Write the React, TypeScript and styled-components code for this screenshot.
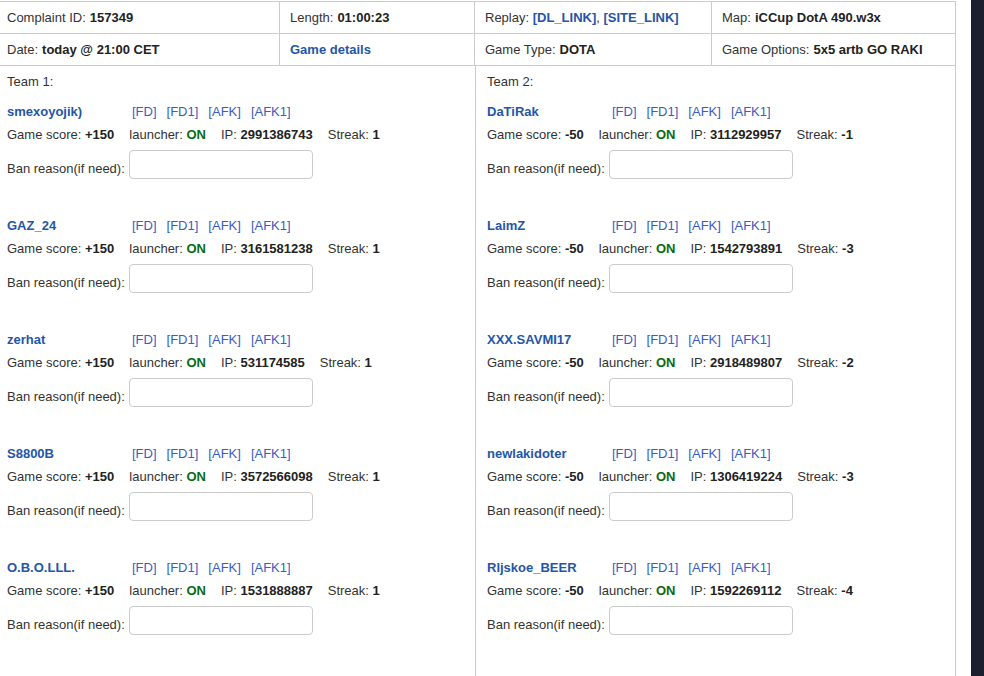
import React from "react";
import styled, { createGlobalStyle } from "styled-components";

const GlobalStyle = createGlobalStyle`
    html, body {
        margin: 0;
        padding: 0;
        background: #fff;
    }
    body {
        font-family: "Liberation Sans", Arial, sans-serif;
        font-size: 13px;
        color: #333;
    }
`;

const Page = styled.div`
    display: flex;
    min-height: 676px;
`;

const Panel = styled.div`
    width: 956px;
    padding-top: 1px;
    display: flex;
    flex-direction: column;
`;

const DarkEdge = styled.div`
    margin-left: auto;
    width: 13px;
    background: #1b1f2e;
`;

const InfoGrid = styled.div`
    display: grid;
    grid-template-columns: 280px 195px 237px 244px;
    border-top: 1px solid #ccc;
`;

const InfoCell = styled.div`
    height: 31px;
    display: flex;
    align-items: center;
    padding-left: 7px;
    border-bottom: 1px solid #ccc;
    border-right: 1px solid #ccc;
    white-space: nowrap;
    &:nth-child(4n + 2),
    &:nth-child(4n + 3),
    &:nth-child(4n + 4) {
        padding-left: 10px;
    }
`;

const Value = styled.b`
    color: #222;
    margin-left: 4px;
`;

const Link = styled.a`
    color: #2456a8;
    font-weight: bold;
    text-decoration: none;
`;

const Teams = styled.div`
    flex: 1;
    display: grid;
    grid-template-columns: 476px 480px;
`;

const TeamColumn = styled.div`
    border-right: 1px solid #ccc;
    padding: 8px 0 0 7px;
    &:last-child {
        padding-left: 11px;
    }
`;

const TeamTitle = styled.div`
    line-height: 16px;
    margin-bottom: 11px;
`;

const Player = styled.div`
    display: flex;
    flex-direction: column;
    margin-bottom: 36px;
`;

const NameRow = styled.div`
    display: flex;
    align-items: center;
    height: 20px;
`;

const Name = styled.a`
    width: 125px;
    color: #2456a8;
    font-weight: bold;
    text-decoration: none;
`;

const Flag = styled.a`
    color: #3a5cbf;
    text-decoration: none;
    margin-right: 10px;
`;

const StatsRow = styled.div`
    display: flex;
    align-items: center;
    gap: 15px;
    height: 20px;
    margin-top: 3px;
`;

const Stat = styled.span`
    white-space: nowrap;
`;

const Strong = styled.b<{ $green?: boolean }>`
    color: ${(p) => (p.$green ? "#0a6b14" : "#222")};
`;

const BanRow = styled.label`
    display: flex;
    align-items: flex-end;
    margin-top: 6px;
`;

const BanLabel = styled.span`
    line-height: 16px;
    padding-bottom: 2px;
`;

const BanInput = styled.input`
    width: 184px;
    height: 29px;
    box-sizing: border-box;
    margin: 0 0 0 4px;
    border: 1px solid #ccc;
    border-radius: 4px;
    font: inherit;
    padding: 0 6px;
`;

type PlayerData = {
    name: string;
    score: string;
    ip: string;
    streak: string;
};

const team1: PlayerData[] = [
    { name: "smexoyojik)", score: "+150", ip: "2991386743", streak: "1" },
    { name: "GAZ_24", score: "+150", ip: "3161581238", streak: "1" },
    { name: "zerhat", score: "+150", ip: "531174585", streak: "1" },
    { name: "S8800B", score: "+150", ip: "3572566098", streak: "1" },
    { name: "O.B.O.LLL.", score: "+150", ip: "1531888887", streak: "1" },
];

const team2: PlayerData[] = [
    { name: "DaTiRak", score: "-50", ip: "3112929957", streak: "-1" },
    { name: "LaimZ", score: "-50", ip: "1542793891", streak: "-3" },
    { name: "XXX.SAVMI17", score: "-50", ip: "2918489807", streak: "-2" },
    { name: "newlakidoter", score: "-50", ip: "1306419224", streak: "-3" },
    { name: "Rljskoe_BEER", score: "-50", ip: "1592269112", streak: "-4" },
];

const PlayerBlock: React.FC<{ p: PlayerData }> = ({ p }) => (
    <Player>
        <NameRow>
            <Name href="#">{p.name}</Name>
            <Flag href="#">[FD]</Flag>
            <Flag href="#">[FD1]</Flag>
            <Flag href="#">[AFK]</Flag>
            <Flag href="#">[AFK1]</Flag>
        </NameRow>
        <StatsRow>
            <Stat>Game score: <Strong>{p.score}</Strong></Stat>
            <Stat>launcher: <Strong $green>ON</Strong></Stat>
            <Stat>IP: <Strong>{p.ip}</Strong></Stat>
            <Stat>Streak: <Strong>{p.streak}</Strong></Stat>
        </StatsRow>
        <BanRow>
            <BanLabel>Ban reason(if need):</BanLabel>
            <BanInput type="text" />
        </BanRow>
    </Player>
);

const App: React.FC = () => {
    return (
        <Page>
            <GlobalStyle />
            <Panel>
                <InfoGrid>
                    <InfoCell>Complaint ID:<Value>157349</Value></InfoCell>
                    <InfoCell>Length:<Value>01:00:23</Value></InfoCell>
                    <InfoCell>
                        Replay:&nbsp;<Link href="#">[DL_LINK]</Link>,&nbsp;<Link href="#">[SITE_LINK]</Link>
                    </InfoCell>
                    <InfoCell>Map:<Value>iCCup DotA 490.w3x</Value></InfoCell>
                    <InfoCell>Date:<Value>today @ 21:00 CET</Value></InfoCell>
                    <InfoCell><Link href="#">Game details</Link></InfoCell>
                    <InfoCell>Game Type:<Value>DOTA</Value></InfoCell>
                    <InfoCell>Game Options:<Value>5x5 artb GO RAKI</Value></InfoCell>
                </InfoGrid>
                <Teams>
                    <TeamColumn>
                        <TeamTitle>Team 1:</TeamTitle>
                        {team1.map((p) => (
                            <PlayerBlock key={p.name} p={p} />
                        ))}
                    </TeamColumn>
                    <TeamColumn>
                        <TeamTitle>Team 2:</TeamTitle>
                        {team2.map((p) => (
                            <PlayerBlock key={p.name} p={p} />
                        ))}
                    </TeamColumn>
                </Teams>
            </Panel>
            <DarkEdge />
        </Page>
    );
};

export default App;
